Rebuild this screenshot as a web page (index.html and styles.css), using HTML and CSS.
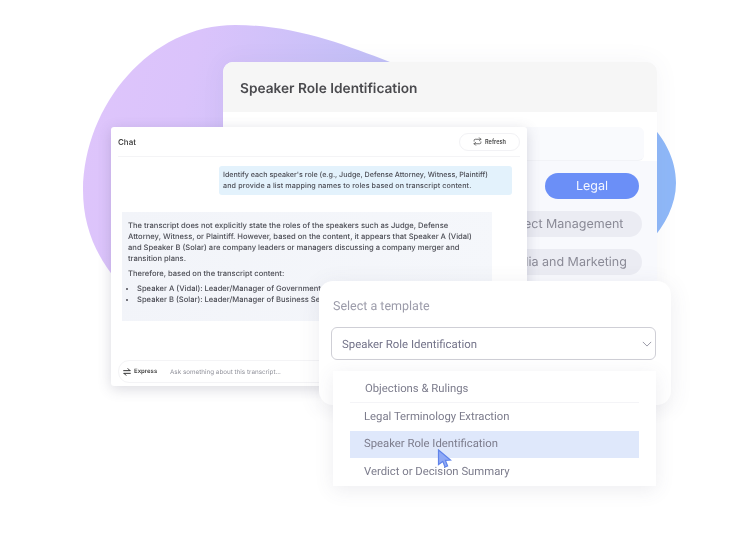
FILE: index.html
```html
<!DOCTYPE html>
<html lang="en">
<head>
    <meta charset="UTF-8">
    <meta name="viewport" content="width=device-width, initial-scale=1.0">
    <title>Speaker Role Identification</title>
    <link rel="stylesheet" href="styles.css">
</head>
<body>
    <div class="stage">
        <svg class="blob" width="741" height="550" viewBox="0 0 741 550">
            <defs>
                <linearGradient id="blobFill" x1="0" y1="0" x2="1" y2="0.12">
                    <stop offset="0" stop-color="#dfc5fb"/>
                    <stop offset="0.2" stop-color="#dac3fb"/>
                    <stop offset="0.5" stop-color="#c3c0f7"/>
                    <stop offset="0.8" stop-color="#a6c0f8"/>
                    <stop offset="1" stop-color="#8fb8f8"/>
                </linearGradient>
            </defs>
            <path fill="url(#blobFill)" d="M83 190 C84 105 150 25 235 25 C295 25 345 45 390 62 C450 85 590 85 640 115 C665 135 676 160 676 183 C676 205 665 225 650 242 L300 320 L118 282 C95 255 83 225 83 190 Z"/>
        </svg>

        <section class="back-card">
            <h2 class="back-title">Speaker Role Identification</h2>
            <div class="back-body">
                <div class="back-search"></div>
                <div class="back-list">
                    <div class="pill pill-active">Legal</div>
                    <div class="pill">Project Management</div>
                    <div class="pill">Social Media and Marketing</div>
                </div>
            </div>
        </section>

        <section class="chat-card">
            <div class="chat-top">
                <span class="chat-name">Chat</span>
                <button class="refresh">
                    <svg width="9" height="9" viewBox="0 0 24 24" fill="none" stroke="#555" stroke-width="2.2" stroke-linecap="round" stroke-linejoin="round"><path d="M17 2l4 4-4 4"/><path d="M3 11V9a3 3 0 0 1 3-3h15"/><path d="M7 22l-4-4 4-4"/><path d="M21 13v2a3 3 0 0 1-3 3H3"/></svg>
                    Refresh
                </button>
            </div>
            <div class="chat-body">
                <p class="bubble">
                    <span class="line">Identify each speaker's role (e.g., Judge, Defense Attorney, Witness, Plaintiff)</span>
                    <span class="line line-loose">and provide a list mapping names to roles based on transcript content.</span>
                </p>
                <div class="answer">
                    <p>The transcript does not explicitly state the roles of the speakers such as Judge, Defense Attorney, Witness, or Plaintiff. However, based on the content, it appears that Speaker A (Vidal) and Speaker B (Solar) are company leaders or managers discussing a company merger and transition plans.</p>
                    <p>Therefore, based on the transcript content:</p>
                    <ul>
                        <li>Speaker A (Vidal): Leader/Manager of Government Services</li>
                        <li>Speaker B (Solar): Leader/Manager of Business Services</li>
                    </ul>
                </div>
            </div>
            <div class="chat-input">
                <span class="mode">
                    <svg width="8" height="8" viewBox="0 0 24 24" fill="none" stroke="#333" stroke-width="3" stroke-linecap="round" stroke-linejoin="round"><path d="M2 8h19M15 2l6 6"/><path d="M22 16H3M9 22l-6-6"/></svg>
                    Express
                </span>
                <span class="ask">Ask something about this transcript...</span>
            </div>
        </section>

        <section class="template-card">
            <div class="template-label">Select a template</div>
            <div class="select">
                <span>Speaker Role Identification</span>
                <svg width="10" height="6" viewBox="0 0 12 7" fill="none" stroke="#9a9aa8" stroke-width="1.2"><path d="M1 1l5 5 5-5"/></svg>
            </div>
        </section>

        <ul class="options">
            <li class="option option-first">Objections &amp; Rulings</li>
            <li class="option">Legal Terminology Extraction</li>
            <li class="option option-hover">Speaker Role Identification</li>
            <li class="option">Verdict or Decision Summary</li>
        </ul>

        <svg class="cursor" width="15" height="19" viewBox="0 0 15 19">
            <path d="M1.5 1 L13.5 11 L8.4 11.4 L10.6 17 L8 18 L5.8 12.4 L1.5 15.5 Z" fill="#8fa9f5" stroke="#5f83ea" stroke-width="1.2"/>
        </svg>
    </div>
</body>
</html>
```

FILE: styles.css
```css
* {
    margin: 0;
    padding: 0;
    box-sizing: border-box;
}

body {
    background-color: #fff;
    font-family: Inter, "Liberation Sans", sans-serif;
    text-rendering: geometricPrecision;
    overflow: hidden;
}

/* the source picture is a soft, scaled image */
.stage {
    position: relative;
    width: 741px;
    height: 550px;
    overflow: hidden;
    filter: blur(0.3px);
}

.blob {
    position: absolute;
    left: 0;
    top: 0;
}

/* back card */
.back-card {
    position: absolute;
    left: 223px;
    top: 62px;
    width: 434px;
    height: 240px;
    border-radius: 10px 10px 0 0;
    background-color: #fff;
    box-shadow: 0 0 24px rgba(90, 90, 120, 0.06);
    overflow: hidden;
}

.back-title {
    height: 50px;
    padding: 19px 17px 0;
    background-color: #f6f6f6;
    color: #4a4a4e;
    font-family: Inter, sans-serif;
    font-size: 13.7px;
    font-weight: 600;
}

.back-body {
    padding: 15px 13px 0 0;
}

.back-search {
    height: 34px;
    background-color: #f9fafd;
    border-radius: 6px;
    border-bottom: 1px solid #f2f3f7;
}

.back-list {
    display: flex;
    flex-direction: column;
    align-items: flex-end;
    gap: 12px;
    height: 140px;
    margin-right: -13px;
    padding: 12px 15px 0 0;
    background-color: #f8f9fd;
}

.pill {
    width: 300px;
    height: 26px;
    border-radius: 13px;
    background-color: #ebecf3;
    color: #8a8a96;
    font-size: 12.5px;
    line-height: 27px;
    white-space: nowrap;
    overflow: hidden;
}

.pill:nth-child(2) {
    padding-left: 159px;
}

.pill:nth-child(3) {
    padding-left: 121px;
}

.pill-active {
    width: 94px;
    margin-right: 3px;
    background-color: #6b8ff7;
    color: #f4f6ff;
    line-height: 28px;
    text-align: center;
}

/* chat card */
.chat-card {
    position: absolute;
    left: 111px;
    top: 127px;
    width: 416px;
    height: 259px;
    border-radius: 3px;
    background-color: #fff;
    box-shadow: 0 3px 14px rgba(70, 70, 100, 0.2);
}

.chat-top {
    display: flex;
    justify-content: space-between;
    align-items: center;
    height: 30px;
    margin: 0 7px;
    border-bottom: 1px solid #f4f4f6;
}

.chat-name {
    font-size: 8px;
    font-weight: 500;
    color: #333;
}

.refresh {
    display: flex;
    align-items: center;
    gap: 3px;
    width: 61px;
    height: 18px;
    padding-left: 13px;
    border: 1px solid #f2f2f5;
    border-radius: 9px;
    background-color: #fff;
    color: #444;
    font-family: Inter, sans-serif;
    font-size: 5.6px;
    font-weight: 600;
}

.chat-body {
    height: 203px;
    padding-top: 9px;
    font-weight: 500;
    line-height: 11px;
    color: #4c4d55;
}

.bubble {
    width: 293px;
    height: 29px;
    margin-left: 108px;
    padding: 3px 8px 0 4px;
    border-radius: 3px;
    background-color: #e3f2fc;
    font-size: 7.15px;
}

.line {
    display: block;
    white-space: nowrap;
}

.line-loose {
    letter-spacing: 0.12px;
}

.answer {
    width: 370px;
    height: 109px;
    margin: 17px 0 0 11px;
    padding: 8px 15px 0 6px;
    background: linear-gradient(100deg, #f2f4f9, #f5f7fb);
    font-size: 7.6px;
}

.answer p {
    margin-bottom: 4px;
}

.answer ul {
    margin-top: 1px;
    padding-left: 9px;
    white-space: nowrap;
}

.chat-input {
    display: flex;
    align-items: center;
    height: 23px;
    margin: 0 7px;
    padding-left: 4px;
    border: 1px solid #f4f4f6;
    border-radius: 11px;
    font-size: 6.3px;
}

.mode {
    display: flex;
    align-items: center;
    gap: 3px;
    width: 47px;
    font-size: 6px;
    font-weight: 600;
    color: #444;
}

.ask {
    color: #92939c;
}

/* template dropdown */
.template-card {
    position: absolute;
    left: 319px;
    top: 281px;
    width: 352px;
    height: 124px;
    padding: 18px 12px 0;
    border-radius: 14px;
    background-color: #fff;
    box-shadow: 0 4px 22px rgba(80, 80, 110, 0.1);
}

.template-label {
    padding-left: 2px;
    color: #9c9caa;
    font-family: Roboto, sans-serif;
    font-size: 12.5px;
}

.select {
    display: flex;
    justify-content: space-between;
    align-items: center;
    width: 325px;
    height: 33px;
    margin-top: 13px;
    padding: 0 3px 0 10px;
    border: 1px solid #cfcfd6;
    border-radius: 6px;
    color: #74748a;
    font-family: Roboto, sans-serif;
    font-size: 11.4px;
}

.options {
    position: absolute;
    left: 333px;
    top: 371px;
    width: 323px;
    height: 115px;
    padding: 3px 17px 0;
    list-style: none;
    background-color: #fff;
    box-shadow: 0 4px 18px rgba(80, 80, 110, 0.1);
    color: #7c7c8c;
    font-family: Roboto, sans-serif;
    font-size: 11.3px;
}

.option {
    height: 28px;
    padding-left: 14px;
    line-height: 27px;
}

.option-first {
    height: 29px;
    padding-left: 15px;
    border-bottom: 1px solid #f4f4f7;
    line-height: 29px;
}

.option-hover {
    height: 27px;
    background-color: #dfe8fb;
    line-height: 25px;
}

.cursor {
    position: absolute;
    left: 437px;
    top: 449px;
}
```
